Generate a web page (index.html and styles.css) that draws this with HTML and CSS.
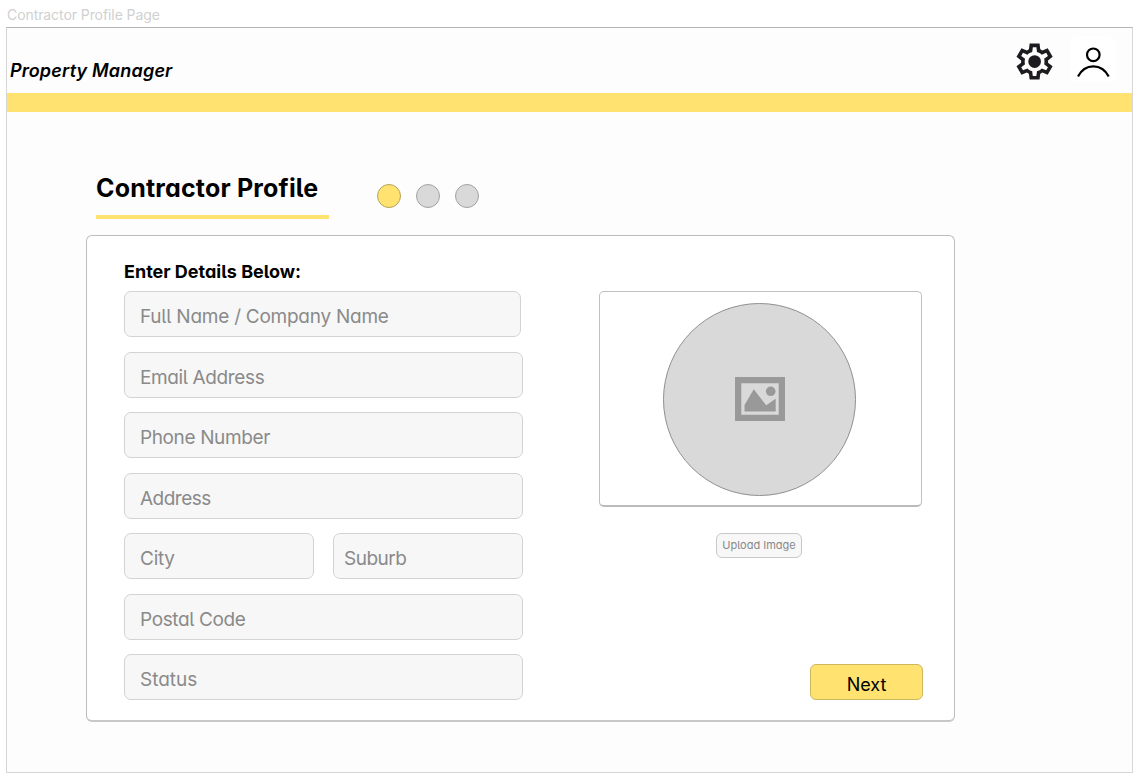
FILE: index.html
```html
<!DOCTYPE html>
<html lang="en">
<head>
<meta charset="utf-8">
<title>Contractor Profile Page</title>
<link rel="stylesheet" href="styles.css">
</head>
<body>
<div class="frame-label"><span>Contractor Profile Page</span></div>
<div class="frame">
  <header class="header">
    <div class="brand">Property Manager</div>
    <div class="header-icons">
      <svg class="gear" viewBox="0 -960 960 960"><path d="m370-80-16-128q-13-5-24.500-12T307-235l-119 50L78-375l103-78q-1-7-1-13.500v-27q0-6.500 1-13.500L78-585l110-190 119 50q11-8 23-15t24-12l16-128h220l16 128q13 5 24.500 12t22.500 15l119-50 110 190-103 78q1 7 1 13.500v27q0 6.500-2 13.500l103 78-110 190-118-50q-11 8-23 15t-24 12L590-80H370Zm70-80h79l14-106q31-8 57.500-23.500T639-327l99 41 39-68-86-65q5-14 7-29.500t2-31.500q0-16-2-31.500t-7-29.500l86-65-39-68-99 42q-22-23-48.500-38.500T533-694l-13-106h-79l-14 106q-31 8-57.500 23.500T321-633l-99-41-39 68 86 64q-5 15-7 30t-2 32q0 16 2 31t7 30l-86 65 39 68 99-42q22 23 48.500 38.500T427-266l13 106Z"/><circle cx="481" cy="-480" r="141"/></svg>
      <svg class="user" viewBox="0 0 46 46"><circle cx="23.300" cy="18.800" r="6.300"/><path d="M8 40.600C11.200 34.300 16.800 30.400 23.300 30.400S35.500 34.300 38.700 40.600"/></svg>
    </div>
  </header>
  <div class="band"></div>
  <main class="content">
    <div class="title-row">
      <h1 class="title"><span>Contractor Profile</span></h1>
      <div class="steps"><i class="step active"></i><i class="step"></i><i class="step"></i></div>
    </div>
    <section class="card">
      <form class="form">
        <h2 class="subtitle"><span>Enter Details Below:</span></h2>
        <div class="fields">
          <div class="field first"><span class="t-name">Full Name / Company Name</span></div>
          <div class="field"><span class="t-email">Email Address</span></div>
          <div class="field"><span class="t-phone">Phone Number</span></div>
          <div class="field"><span class="t-address">Address</span></div>
          <div class="pair">
            <div class="field"><span class="t-city">City</span></div>
            <div class="field suburb"><span class="t-suburb">Suburb</span></div>
          </div>
          <div class="field"><span class="t-postal">Postal Code</span></div>
          <div class="field"><span class="t-status">Status</span></div>
        </div>
      </form>
      <aside class="side">
        <div class="preview">
          <div class="avatar">
            <svg class="image-icon" viewBox="0 0 50 44"><path fill-rule="evenodd" d="M0 0H50V44H0ZM6.300 6.300V37.700H43.700V6.300Z"/><path d="M9.500 34.500V28L18.800 12.300 31.200 28.300 40.700 21.700V34.500Z"/><circle cx="35.700" cy="14.300" r="4.800"/></svg>
          </div>
        </div>
        <div class="upload"><span>Upload Image</span></div>
        <div class="next"><span>Next</span></div>
      </aside>
    </section>
  </main>
</div>
</body>
</html>
```
FILE: styles.css
```css
* { box-sizing: border-box; }
body {
  margin: 0;
  width: 1140px;
  height: 778px;
  overflow: hidden;
  background: #fff;
  font-family: Inter, "Liberation Sans", sans-serif;
  font-feature-settings: "cv11", "cv05";
  white-space: nowrap;
}
svg { display: block; }
.frame-label {
  height: 27px;
  padding: 6px 0 0 7px;
  font-size: 14px;
  line-height: 18px;
  letter-spacing: -0.080px;
  color: #d0d0d0;
  font-feature-settings: normal;
}
.frame {
  width: 1127px;
  height: 746px;
  margin-left: 6px;
  border: 1px solid #d6d6d6;
  border-top-color: #b4b4b4;
  background: #fdfdfd;
}
.header {
  height: 65px;
  display: flex;
  justify-content: space-between;
  padding: 8px 16px 0 3px;
}
.brand {
  padding-top: 24px;
  font-size: 18px;
  line-height: 22px;
  font-weight: 600;
  font-style: italic;
  letter-spacing: 0.180px;
  font-feature-settings: normal;
  color: #000;
}
.header-icons { display: flex; gap: 14px; }
.gear { width: 43.200px; height: 43.200px; margin-top: 3.500px; fill: #1d1b20; }
.user {
  width: 46px;
  height: 46px;
  border-radius: 8px;
  background: #fff;
  fill: none;
  stroke: #000;
  stroke-width: 2.200;
}
.band { height: 19px; background: #ffe270; }
.content { padding: 60px 0 0 79px; }
.title-row { display: flex; height: 63px; padding-left: 10px; }
.title {
  margin: 0;
  width: 233px;
  height: 47px;
  border-bottom: 4px solid #ffe270;
  font-size: 25px;
  line-height: 32px;
  font-weight: 700;
  letter-spacing: 0.180px;
}
.steps { display: flex; gap: 15px; padding: 12px 0 0 48px; }
.step {
  width: 24px;
  height: 24px;
  border: 1px solid #a3a3a3;
  border-radius: 50%;
  background: #d9d9d9;
}
.step.active { background: #ffe270; border-color: #b5a45e; }
.card {
  display: flex;
  justify-content: space-between;
  width: 869px;
  height: 487px;
  border: 1px solid #bdbdbd;
  border-bottom: 2px solid #c8c8c8;
  border-radius: 6px;
  background: #fff;
  padding: 24px 31px 0 37px;
}
.form { width: 399px; }
.subtitle {
  margin: 0;
  height: 31px;
  font-size: 18px;
  line-height: 24px;
  font-weight: 700;
}
.fields { display: grid; gap: 14.500px; }
.field {
  height: 46px;
  border: 1px solid #d3d3d3;
  border-radius: 7px;
  background: #f7f7f7;
  color: #8a8a8a;
  font-size: 19px;
  line-height: 50px;
  padding-left: 15px;
}
.t-name { letter-spacing: -0.250px; }
.t-email, .t-phone, .t-postal { letter-spacing: -0.380px; }
.t-address, .t-suburb { letter-spacing: -0.520px; }
.t-city { letter-spacing: -0.250px; }
.first { width: 397px; }
.pair { display: grid; grid-template-columns: 190px 190px; gap: 19px; }
.suburb { padding-left: 10px; }
.side {
  display: flex;
  flex-direction: column;
  align-items: center;
  width: 324px;
  padding-top: 31px;
}
.preview {
  width: 323px;
  height: 216px;
  margin-right: 1px;
  border: 1px solid #c0c0c0;
  border-bottom: 2px solid #bbb;
  border-radius: 5px;
  padding: 11px 0 0 62.500px;
}
.avatar {
  display: flex;
  align-items: center;
  justify-content: center;
  width: 193px;
  height: 193px;
  border: 1px solid #909090;
  border-radius: 50%;
  background: #d9d9d9;
}
.image-icon { width: 50px; height: 44px; margin: 0 0 2px 2px; fill: #999; }
.upload {
  width: 86px;
  height: 25px;
  margin: 26px 4px 0 0;
  border: 1px solid #c8c8c8;
  border-radius: 6px;
  background: #f7f7f7;
  color: #888;
  font-size: 11px;
  line-height: 23px;
  text-align: center;
}
.next {
  align-self: flex-end;
  width: 113px;
  height: 36px;
  margin-top: 106px;
  border: 1px solid #cdb75d;
  border-radius: 6px;
  background: #ffe270;
  color: #000;
  font-size: 18px;
  line-height: 39px;
  text-align: center;
}
```
